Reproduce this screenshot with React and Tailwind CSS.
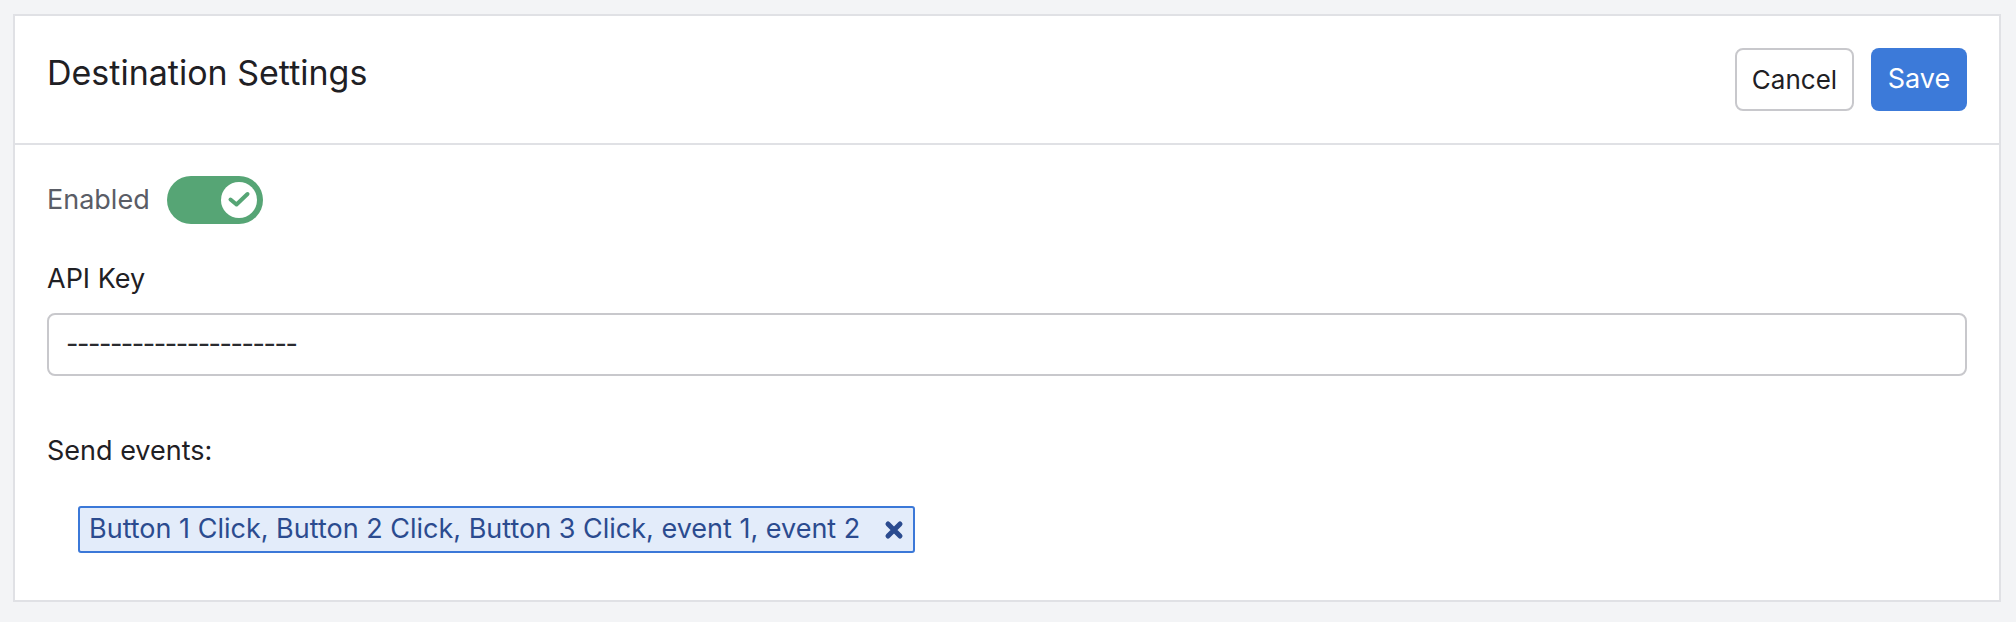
export default function App() {
  return (
    <div className="min-h-screen bg-[#f3f4f6] pt-[14px] pl-[13px] pr-[15px] pb-[19px] font-['Inter',sans-serif]">
      <div className="bg-white border-2 border-[#e0e1e5]">
        <div className="flex items-start justify-between px-[32px] py-[32px] border-b-2 border-[#e0e1e5]">
          <h1 className="text-[34px] leading-[40px] text-[#1f2024] mt-[5px]">Destination Settings</h1>
          <div className="flex gap-[17px]">
            <button className="h-[63px] w-[119px] rounded-[8px] border-2 border-[#c8c8cc] bg-white text-[26px] text-[#1f2024]">
              Cancel
            </button>
            <button className="h-[63px] w-[96px] rounded-[8px] bg-[#3c7ad9] text-[27px] text-white">Save</button>
          </div>
        </div>

        <div className="px-[32px] pt-[31px] pb-[47px]">
          <div className="flex items-center gap-[17px]">
            <span className="text-[27px] leading-[40px] text-[#5a5d66]">Enabled</span>
            <div className="flex h-[48px] w-[96px] items-center justify-end rounded-full bg-[#56a575] pr-[6px]">
              <div className="flex h-[36px] w-[36px] items-center justify-center rounded-full bg-white">
                <svg width="24" height="24" viewBox="0 0 24 24" fill="none">
                  <path d="M3.5 11.5L9.5 16.5L20.5 6" stroke="#56a575" strokeWidth="4" strokeLinecap="round" strokeLinejoin="round" />
                </svg>
              </div>
            </div>
          </div>

          <label className="mt-[35px] block text-[27px] leading-[40px] text-[#1f2024]">API Key</label>
          <div className="mt-[14px] flex h-[63px] items-center rounded-[8px] border-2 border-[#c8c8cc] px-[17px]">
            <span className="text-[27px] tracking-[-1.45px] text-[#2a2b2f]">---------------------</span>
          </div>

          <div className="mt-[55px] text-[27px] leading-[40px] text-[#1f2024]">Send events:</div>

          <div className="mt-[35px] pl-[31px]">
            <div className="inline-flex h-[47px] items-center gap-[24px] rounded-[3px] border-2 border-[#3b78d8] bg-[#e3ecfa] pl-[9px] pr-[9px]">
              <span className="text-[27px] text-[#2b4b8f]">Button 1 Click, Button 2 Click, Button 3 Click, event 1, event 2</span>
              <svg width="20" height="20" viewBox="0 0 20 20" fill="none">
                <path d="M4 4l12 12M16 4L4 16" stroke="#2b4b8f" strokeWidth="5" strokeLinecap="round" />
              </svg>
            </div>
          </div>
        </div>
      </div>
    </div>
  );
}
